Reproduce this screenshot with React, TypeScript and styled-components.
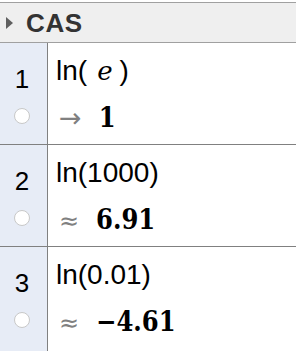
import React from "react";
import styled, { createGlobalStyle } from "styled-components";

const Global = createGlobalStyle`
  html, body { margin: 0; padding: 0; background: #ffffff; }
  body { font-family: "Liberation Sans", Arial, sans-serif; }
`;

const Page = styled.div`
  width: 296px;
  height: 351px;
  overflow: hidden;
  background: #ffffff;
  padding-top: 2px;
  box-sizing: border-box;
`;

const Header = styled.div`
  height: 41px;
  box-sizing: border-box;
  border-top: 1px solid #a0a0a0;
  border-bottom: 1px solid #a0a0a0;
  background: #efefef;
  display: flex;
  align-items: center;
  gap: 13px;
  padding-left: 6px;
`;

const Triangle = styled.span`
  width: 0;
  height: 0;
  border-top: 6px solid transparent;
  border-bottom: 6px solid transparent;
  border-left: 7px solid #606060;
`;

const Title = styled.span`
  font-family: "Liberation Sans", Arial, sans-serif;
  font-weight: bold;
  font-size: 26px;
  line-height: 26px;
  color: #333333;
  letter-spacing: 0.6px;
`;

const Row = styled.div<{ $last?: boolean }>`
  display: grid;
  grid-template-columns: 48px 1fr;
  height: ${(p) => (p.$last ? 105 : 102)}px;
  border-bottom: ${(p) => (p.$last ? "none" : "1px solid #808080")};
  box-sizing: border-box;
`;

const Gutter = styled.div`
  background: #e7ecf6;
  border-right: 1px solid #808080;
  display: flex;
  flex-direction: column;
  align-items: center;
  padding-top: 23px;
  padding-right: 3px;
  gap: 16px;
`;

const Num = styled.span`
  font-family: "Liberation Sans", Arial, sans-serif;
  font-size: 26px;
  line-height: 26px;
  color: #000000;
`;

const Dot = styled.span`
  width: 14px;
  height: 14px;
  border-radius: 50%;
  border: 1px solid #c8c8c8;
  background: #ffffff;
`;

const Cell = styled.div`
  display: flex;
  flex-direction: column;
  padding-left: 8px;
  padding-top: 13px;
  gap: 16px;
`;

const Input = styled.div`
  font-family: "Liberation Sans", Arial, sans-serif;
  font-size: 28px;
  line-height: 30px;
  color: #000000;
`;

const Var = styled.span`
  font-family: "DejaVu Serif", serif;
  font-style: italic;
  font-size: 26px;
  padding: 0 7px 0 10px;
`;

const Output = styled.div`
  display: flex;
  align-items: baseline;
  line-height: 32px;
`;

const Sym = styled.span<{ $size: number }>`
  font-family: "DejaVu Sans", sans-serif;
  font-size: ${(p) => p.$size}px;
  color: #808080;
  margin-left: 3px;
  margin-right: 17px;
`;

const Value = styled.span`
  font-family: "DejaVu Serif Condensed", "DejaVu Serif", serif;
  font-stretch: condensed;
  font-weight: bold;
  font-size: 27px;
  color: #000000;
`;

const rows = [
  { n: 1, input: <>ln(<Var>e</Var>)</>, sym: "→", size: 27, val: "1" },
  { n: 2, input: <>ln(1000)</>, sym: "≈", size: 24, val: "6.91" },
  { n: 3, input: <>ln(0.01)</>, sym: "≈", size: 24, val: "−4.61", last: true },
];

export default function App() {
  return (
    <Page>
      <Global />
      <Header>
        <Triangle />
        <Title>CAS</Title>
      </Header>
      {rows.map((r) => (
        <Row key={r.n} $last={r.last}>
          <Gutter>
            <Num>{r.n}</Num>
            <Dot />
          </Gutter>
          <Cell>
            <Input>{r.input}</Input>
            <Output>
              <Sym $size={r.size}>{r.sym}</Sym>
              <Value>{r.val}</Value>
            </Output>
          </Cell>
        </Row>
      ))}
    </Page>
  );
}
